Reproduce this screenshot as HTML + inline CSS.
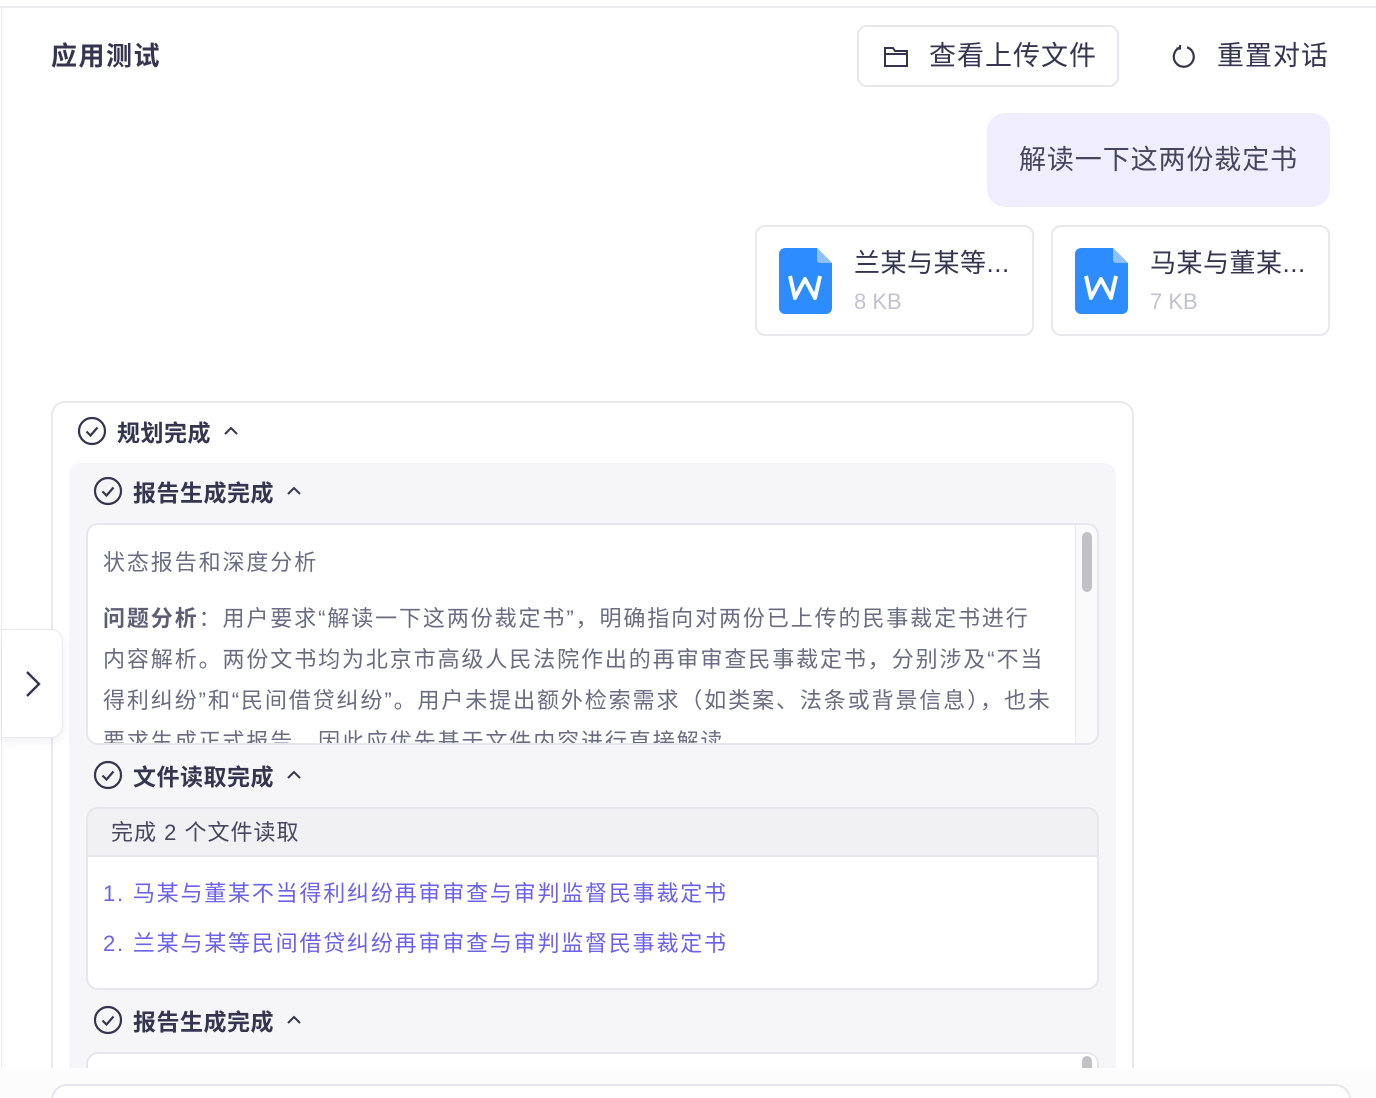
<!DOCTYPE html>
<html style="overflow:hidden;width:1376px;height:1098px"><head><meta charset="utf-8"><style>
*{box-sizing:border-box;margin:0;padding:0}
body{width:1376px;height:1098px;overflow:hidden;background:#fff;font-family:"Liberation Sans","Noto Sans CJK SC",sans-serif;color:#36354f;position:relative}
.abs{position:absolute}
.topline{left:0;top:6px;width:1376px;height:2px;background:#ebebf0}
.leftline{left:1px;top:6px;width:1px;height:1092px;background:#ebebf0}
.btn{left:857px;top:25px;width:262px;height:62px;border:2px solid #e6e6ec;border-radius:10px}
.t27{font-size:27px;line-height:1;white-space:nowrap}
.bubble{left:987px;top:113px;width:343px;height:94px;background:#f0eefc;border-radius:18px}
.card{width:279px;height:111px;border:2px solid #e8e8ee;border-radius:10px;top:225px;background:#fff}
.name{font-size:26px;left:97px;top:16px;white-space:nowrap;letter-spacing:0.5px}
.size{font-size:22px;color:#c3c3cd;left:97px;top:62px}
.panel{left:51px;top:401px;width:1083px;height:720px;border:2px solid #e8e8ee;border-radius:14px;background:#fff}
.inner{left:69px;top:463px;width:1047px;height:660px;background:#f6f6f9;border-radius:12px}
.hd{font-size:23px;font-weight:bold;white-space:nowrap;display:flex;align-items:center;gap:10px;letter-spacing:0.5px}
.box{background:#fff;border:2px solid #e6e6ec;border-radius:12px}
.p{font-size:22px;color:#6b6b82;white-space:nowrap;letter-spacing:1.9px}
.link{font-size:22px;color:#6d61e6;white-space:nowrap;letter-spacing:1.8px}
</style></head><body>
<div class="abs" style="left:0;top:0;width:1376px;height:1098px;overflow:hidden">
<div class="abs topline"></div><div class="abs leftline"></div>
<div class="abs t27" style="left:51px;top:43px;font-size:26px;font-weight:600;letter-spacing:1.5px">应用测试</div>
<div class="abs btn"></div>
<svg class="abs" style="left:883px;top:45px" width="26" height="24" viewBox="0 0 26 24" fill="none" stroke="#36354f" stroke-width="2"><path d="M2 3h8l2 3h12v15H2z M2 9h22"/></svg>
<div class="abs t27" style="left:929px;top:43px;letter-spacing:1px">查看上传文件</div>
<svg class="abs" style="left:1170px;top:43px" width="28" height="28" viewBox="0 0 28 28" fill="none" stroke="#36354f" stroke-width="2.2"><path d="M10 4.5A10 10 0 1 0 17 4.3"/><path d="M10 2v3.5h-3.5"/></svg>
<div class="abs t27" style="left:1217px;top:43px;letter-spacing:1px">重置对话</div>
<div class="abs bubble"></div>
<div class="abs t27" style="left:1019px;top:147px;color:#46455e;letter-spacing:0.9px">解读一下这两份裁定书</div>
<div class="abs card" style="left:755px"><svg class="abs" style="left:22px;top:21px" width="53" height="66" viewBox="0 0 53 66"><path d="M6 0h32l15 15v45a6 6 0 0 1-6 6H6a6 6 0 0 1-6-6V6a6 6 0 0 1 6-6z" fill="#2d8cff"/><path d="M38 0l15 15H41a3 3 0 0 1-3-3z" fill="#8fc0ff"/><path d="M11 28l5 22 10-19 10 19 5-22" fill="none" stroke="#fff" stroke-width="4" stroke-linejoin="round"/></svg><div class="abs name">兰某与某等...</div><div class="abs size">8 KB</div></div>
<div class="abs card" style="left:1051px"><svg class="abs" style="left:22px;top:21px" width="53" height="66" viewBox="0 0 53 66"><path d="M6 0h32l15 15v45a6 6 0 0 1-6 6H6a6 6 0 0 1-6-6V6a6 6 0 0 1 6-6z" fill="#2d8cff"/><path d="M38 0l15 15H41a3 3 0 0 1-3-3z" fill="#8fc0ff"/><path d="M11 28l5 22 10-19 10 19 5-22" fill="none" stroke="#fff" stroke-width="4" stroke-linejoin="round"/></svg><div class="abs name">马某与董某...</div><div class="abs size">7 KB</div></div>

<div class="abs panel"></div>
<div class="abs inner"></div>
<svg width="0" height="0" style="position:absolute"><defs><g id="ck" fill="none" stroke="#36354f" stroke-width="2.2"><circle cx="15" cy="15" r="13"/><path d="M9.5 15.5l4 4 7-8"/></g><path id="up" d="M2 9l6-6 6 6" fill="none" stroke="#36354f" stroke-width="2"/></defs></svg>
<div class="abs hd" style="left:77px;top:414px"><svg width="30" height="30"><use href="#ck"/></svg>规划完成<svg width="16" height="12" style="margin-left:2px"><use href="#up"/></svg></div>
<div class="abs hd" style="left:93px;top:474px"><svg width="30" height="30"><use href="#ck"/></svg>报告生成完成<svg width="16" height="12" style="margin-left:2px"><use href="#up"/></svg></div>
<div class="abs box" style="left:86px;top:523px;width:1013px;height:222px;overflow:hidden">
 <div class="abs" style="right:0;top:0;width:22px;height:222px;border-left:1px solid #ececf0;background:#fafafa"></div>
 <div class="abs" style="right:5px;top:7px;width:10px;height:60px;background:#c1c1c6;border-radius:5px"></div>
 <div class="abs p" style="left:15px;top:20px">状态报告和深度分析</div>
 <div class="abs p" style="left:15px;top:73px;line-height:41px"><b style="color:#5d5d74">问题分析</b>：用户要求“解读一下这两份裁定书”，明确指向对两份已上传的民事裁定书进行<br>内容解析。两份文书均为北京市高级人民法院作出的再审审查民事裁定书，分别涉及“不当<br>得利纠纷”和“民间借贷纠纷”。用户未提出额外检索需求（如类案、法条或背景信息），也未<br>要求生成正式报告，因此应优先基于文件内容进行直接解读。</div>
</div>
<div class="abs hd" style="left:93px;top:758px"><svg width="30" height="30"><use href="#ck"/></svg>文件读取完成<svg width="16" height="12" style="margin-left:2px"><use href="#up"/></svg></div>
<div class="abs box" style="left:86px;top:807px;width:1013px;height:183px;overflow:hidden">
 <div class="abs" style="left:0;top:0;width:1013px;height:48px;background:#f1f1f4;border-bottom:2px solid #e6e6ec"></div>
 <div class="abs p" style="left:23px;top:6px;color:#46455e;letter-spacing:1px">完成 2 个文件读取</div>
 <div class="abs link" style="left:15px;top:67px">1. 马某与董某不当得利纠纷再审审查与审判监督民事裁定书</div>
 <div class="abs link" style="left:15px;top:117px">2. 兰某与某等民间借贷纠纷再审审查与审判监督民事裁定书</div>
</div>
<div class="abs hd" style="left:93px;top:1003px"><svg width="30" height="30"><use href="#ck"/></svg>报告生成完成<svg width="16" height="12" style="margin-left:2px"><use href="#up"/></svg></div>
<div class="abs box" style="left:86px;top:1052px;width:1013px;height:100px"><div class="abs" style="right:5px;top:2px;width:10px;height:40px;background:#c1c1c6;border-radius:5px"></div></div>

<div class="abs" style="left:0;top:1068px;width:1376px;height:30px;background:#fcfcfd"></div>
<div class="abs" style="left:51px;top:1084px;width:1300px;height:40px;border:2px solid #e6e6ec;border-radius:16px;background:#fff"></div>

<div class="abs" style="left:2px;top:629px;width:61px;height:109px;background:#fff;border:1px solid #e8e8ee;border-left:none;border-radius:0 12px 12px 0;box-shadow:0 4px 10px rgba(0,0,0,.06)"></div>
<svg class="abs" style="left:24px;top:670px" width="18" height="28" viewBox="0 0 18 28"><path d="M3 2l12 12L3 26" fill="none" stroke="#36354f" stroke-width="2.4"/></svg>
</div>
</body></html>
